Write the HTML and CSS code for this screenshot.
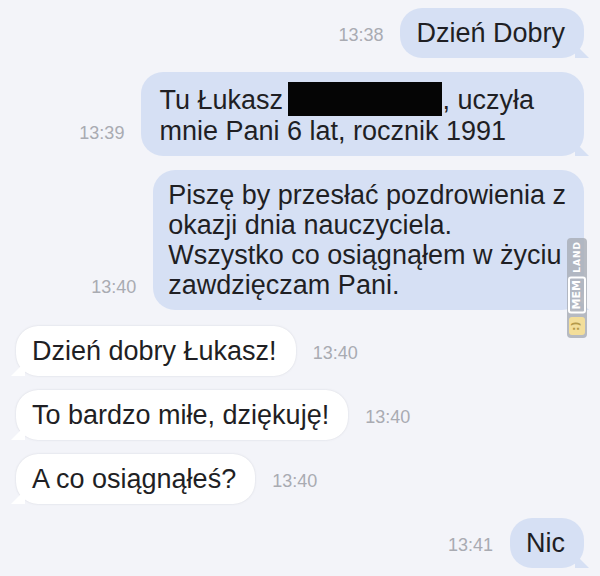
FILE: index.html
```html
<!DOCTYPE html>
<html>
<head>
    <meta charset="UTF-8">
    <meta name="viewport" content="width=device-width, initial-scale=1.0">
    <title>Wiadomości</title>
    <link rel="stylesheet" href="styles.css">
</head>
<body>
    <div id="chat">
        <div class="row out">
            <span class="time">13:38</span>
            <div class="bubble">Dzień Dobry</div>
        </div>
        <div class="row out">
            <span class="time">13:39</span>
            <div class="bubble wide">Tu Łukasz <span class="redact"></span>, uczyła<br>mnie Pani 6 lat, rocznik 1991</div>
        </div>
        <div class="row out">
            <span class="time">13:40</span>
            <div class="bubble long">Piszę by przesłać pozdrowienia z<br>okazji dnia nauczyciela.<br>Wszystko co osiągnąłem w życiu<br>zawdzięczam Pani.</div>
        </div>
        <div class="row in first">
            <div class="bubble">Dzień dobry Łukasz!</div>
            <span class="time">13:40</span>
        </div>
        <div class="row in">
            <div class="bubble">To bardzo miłe, dziękuję!</div>
            <span class="time">13:40</span>
        </div>
        <div class="row in">
            <div class="bubble">A co osiągnąłeś?</div>
            <span class="time">13:40</span>
        </div>
        <div class="row out">
            <span class="time">13:41</span>
            <div class="bubble">Nic</div>
        </div>
    </div>

    <div id="mark">
        <span class="land">LAND</span>
        <span class="mem">MEM</span>
        <span class="smile">:)</span>
    </div>
</body>
</html>
```

FILE: styles.css
```css
body {
    margin: 0;
    padding: 0;
    width: 600px;
    height: 576px;
    overflow: hidden;
    background-color: #f3f4f9;
    color: #1f1f24;
    font-family: "Liberation Sans", Arial, sans-serif;
    position: relative;
}

#chat {
    display: flex;
    flex-direction: column;
    gap: 14px;
    padding: 8px 16px 0 16px;
}

.row {
    display: flex;
    align-items: flex-end;
    gap: 17px;
}

.row.out {
    justify-content: flex-end;
}

.row.in {
    justify-content: flex-start;
}

.row.first {
    margin-top: 2px;
}

.bubble {
    position: relative;
    font-size: 27px;
    line-height: 30px;
    padding: 10px 19px 10px 16px;
    border-radius: 22px;
}

.bubble.wide {
    padding-left: 18px;
    padding-right: 50px;
}

.bubble.long {
    padding-left: 15px;
    padding-right: 18px;
}

.out .bubble {
    background-color: #d6e0f4;
}

.in .bubble {
    background-color: #ffffff;
    box-shadow: 0 0 2px rgba(120, 125, 140, 0.25);
}

.out .bubble::after {
    content: "";
    position: absolute;
    right: -5px;
    bottom: 0;
    width: 14px;
    height: 14px;
    background-color: #d6e0f4;
    clip-path: polygon(0 0, 100% 100%, 0 100%);
}

.in .bubble::after {
    content: "";
    position: absolute;
    left: -5px;
    bottom: 0;
    width: 14px;
    height: 14px;
    background-color: #ffffff;
    clip-path: polygon(100% 0, 100% 100%, 0 100%);
}

.time {
    font-size: 18px;
    color: #a9abb2;
    padding-bottom: 12px;
}

.redact {
    display: inline-block;
    width: 154px;
    height: 34px;
    background-color: #050505;
    vertical-align: -7px;
    margin-left: -2px;
}

#mark {
    position: absolute;
    left: 567px;
    top: 238px;
    width: 20px;
    height: 100px;
    border-radius: 4px;
    background-color: rgba(170, 175, 185, 0.85);
    display: flex;
    flex-direction: column;
    align-items: center;
    gap: 3px;
    padding-top: 3px;
    box-sizing: border-box;
}

#mark span {
    font-family: "DejaVu Sans", sans-serif;
    font-weight: bold;
    color: #ffffff;
    writing-mode: vertical-rl;
    transform: rotate(180deg);
    line-height: 14px;
}

#mark .land {
    font-size: 9px;
    letter-spacing: 1px;
}

#mark .mem {
    font-size: 11px;
    border: 2px solid #ffffff;
    border-radius: 3px;
    padding: 2px 0;
}

#mark .smile {
    font-size: 11px;
    color: #b59a4a;
    background-color: #f3de9a;
    border-radius: 3px;
    width: 16px;
    height: 18px;
    text-align: center;
    margin-top: 1px;
}
```
